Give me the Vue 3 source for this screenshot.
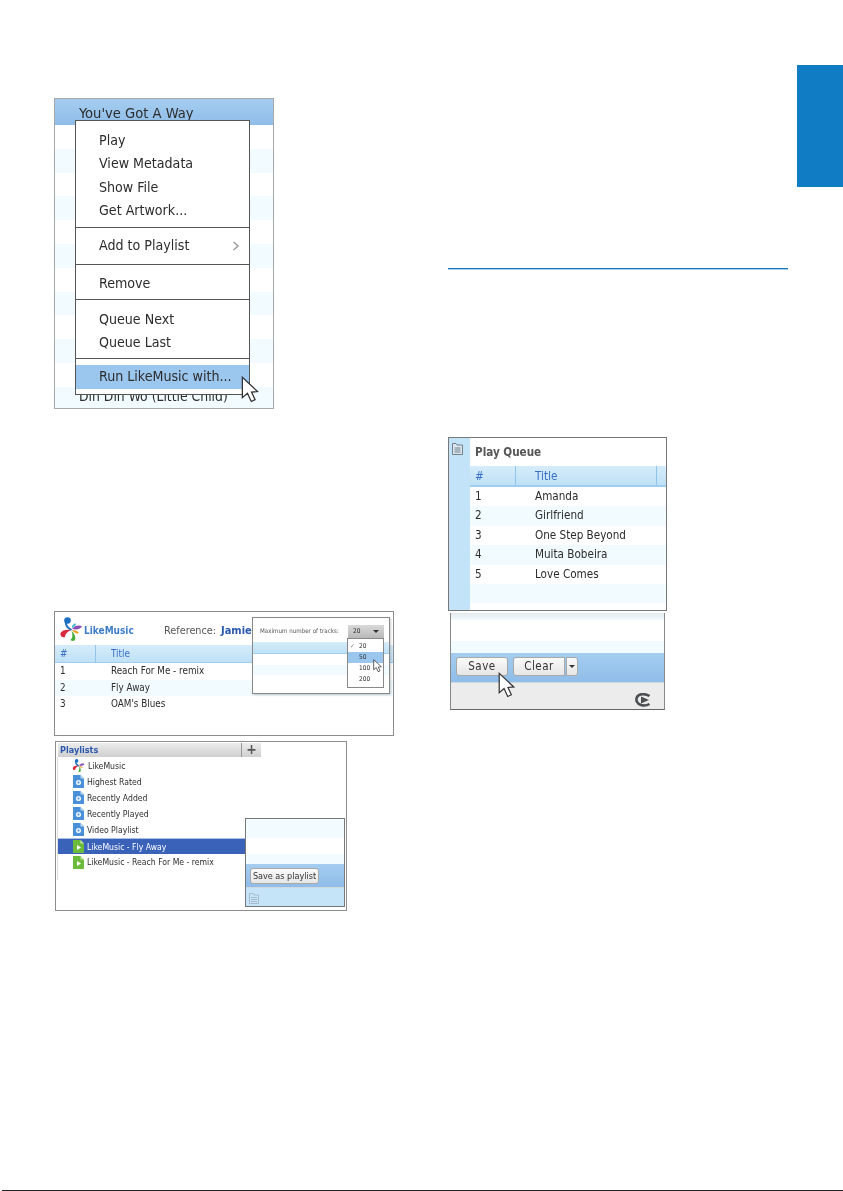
<script setup>
const menuGroups = [
  { cls: 'g1', items: ['Play', 'View Metadata', 'Show File', 'Get Artwork...'] },
  { cls: 'g2', items: ['Add to Playlist'], arrow: true },
  { cls: 'g3', items: ['Remove'] },
  { cls: 'g4', items: ['Queue Next', 'Queue Last'] }
]
const likeRows = [
  ['1', 'Reach For Me - remix'],
  ['2', 'Fly Away'],
  ['3', "OAM's Blues"]
]
const options = ['20', '50', '100', '200']
const playlists = [
  { name: 'LikeMusic', type: 'logo' },
  { name: 'Highest Rated', type: 'blue' },
  { name: 'Recently Added', type: 'blue' },
  { name: 'Recently Played', type: 'blue' },
  { name: 'Video Playlist', type: 'blue' },
  { name: 'LikeMusic - Fly Away', type: 'green', selected: true },
  { name: 'LikeMusic - Reach For Me - remix', type: 'green' }
]
const queue = ['Amanda', 'Girlfriend', 'One Step Beyond', 'Muita Bobeira', 'Love Comes', '']
const cursorPath = 'M1 1 L1 17 L5 13.5 L8 20 L11 18.6 L8.2 12.6 L13 12.2 Z'
</script>

<template>
  <div class="page">
    <div class="col-left">
      <section class="fig fig-menu">
        <div class="track-row selected">You've Got A Way</div>
        <div v-for="n in 11" :key="n" class="track-row" :class="{ light: n % 2 === 0 }"></div>
        <div class="track-row light last">Din Din Wo (Little Child)</div>
        <div class="context">
          <div v-for="g in menuGroups" :key="g.cls" class="group" :class="g.cls">
            <div v-for="it in g.items" :key="it" class="item">
              <span>{{ it }}</span>
              <svg v-if="g.arrow" class="chev" viewBox="0 0 8 10" width="8" height="10">
                <path d="M1.500 1 L6 5 L1.500 9" fill="none" stroke="#999" stroke-width="1.400" />
              </svg>
            </div>
          </div>
          <div class="group g5"><div class="item hot">Run LikeMusic with...</div></div>
        </div>
        <svg class="cursor cur-menu" viewBox="0 0 14 22" width="18" height="28">
          <path :d="cursorPath" fill="#fff" stroke="#333" stroke-width="1" />
        </svg>
      </section>

      <section class="fig fig-like">
        <header class="like-head">
          <svg class="logo" viewBox="0 0 24 24" width="24" height="24">
            <circle cx="8.500" cy="3.500" r="3.300" fill="#1d6fc0" />
            <path d="M7 5 C6 9 9 11 12.500 13" fill="none" stroke="#1d6fc0" stroke-width="2" />
            <path d="M12 13 C8 12 3 13 1.500 16 C1 19 3 21 6 20 C6 17 8 15 12 13 Z" fill="#d8293e" />
            <path d="M13 12 C16 8 19 8 23 9 C22 12 18 13 13 12 Z" fill="#8a4fb5" />
            <path d="M13 13 C16 13 19 14 20 16 C18 17 15 16 13 13 Z" fill="#e8a020" />
            <path d="M12.500 14 C15 16 17 19 16 23 C14.500 24.500 11.500 24 11.500 22.500 C13.500 22 14 18 12.500 14 Z" fill="#49ad3a" />
            <path d="M13 9 L16 6 L17 8 L13 11 Z" fill="#3bb6c9" />
          </svg>
          <span class="brand">LikeMusic</span>
          <span class="ref">Reference:</span>
          <span class="jamie">Jamie</span>
        </header>
        <div class="tbl-head like-cols">
          <span>#</span><span class="th-title">Title</span>
        </div>
        <div v-for="(r, i) in likeRows" :key="r[0]" class="like-row like-cols" :class="{ light: i === 1 }">
          <span>{{ r[0] }}</span><span>{{ r[1] }}</span>
        </div>
        <div class="tracks-pop">
          <div class="pop-line">
            <span class="pop-label">Maximum number of tracks:</span>
            <span class="select">20<i class="caret"></i></span>
          </div>
          <div class="pop-bar"></div>
          <div class="pop-stripe"></div>
          <div class="dropdown">
            <div v-for="(o, i) in options" :key="o" class="opt" :class="{ on: i === 1 }">
              <span class="tick">{{ i === 0 ? '✓' : '' }}</span>{{ o }}
            </div>
          </div>
          <svg class="cursor cur-pop" viewBox="0 0 14 22" width="9" height="14">
            <path :d="cursorPath" fill="#fff" stroke="#333" stroke-width="1.200" />
          </svg>
        </div>
      </section>

      <section class="fig fig-lists">
        <div class="lists-head">
          <span class="lists-title">Playlists</span>
          <span class="plus">+</span>
        </div>
        <div class="lists-body">
          <div v-for="p in playlists" :key="p.name" class="pl-row" :class="{ sel: p.selected }">
            <svg v-if="p.type === 'logo'" viewBox="0 0 24 24" width="13" height="13" class="pl-icon pl-logo">
              <circle cx="8.500" cy="3.500" r="3.300" fill="#1d6fc0" />
              <path d="M7 5 C6 9 9 11 12.500 13" fill="none" stroke="#1d6fc0" stroke-width="2.500" />
              <path d="M12 13 C8 12 3 13 1.500 16 C1 19 3 21 6 20 C6 17 8 15 12 13 Z" fill="#d8293e" />
              <path d="M13 12 C16 8 19 8 23 9 C22 12 18 13 13 12 Z" fill="#8a4fb5" />
              <path d="M13 13 C16 13 19 14 20 16 C18 17 15 16 13 13 Z" fill="#e8a020" />
              <path d="M12.500 14 C15 16 17 19 16 23 C14.500 24.500 11.500 24 11.500 22.500 C13.500 22 14 18 12.500 14 Z" fill="#49ad3a" />
            </svg>
            <svg v-else-if="p.type === 'blue'" viewBox="0 0 11 13" width="11" height="13" class="pl-icon">
              <path d="M0 0 H7.500 L11 3.500 V13 H0 Z" fill="#4a90d8" />
              <path d="M7.500 0 L11 3.500 H7.500 Z" fill="#b7d8f5" />
              <circle cx="5.500" cy="7.500" r="2.600" fill="#e8f3fc" />
              <circle cx="5.500" cy="7.500" r="1" fill="#4a90d8" />
            </svg>
            <svg v-else viewBox="0 0 11 13" width="11" height="13" class="pl-icon">
              <path d="M0 0 H7.500 L11 3.500 V13 H0 Z" fill="#6cbb3c" />
              <path d="M7.500 0 L11 3.500 H7.500 Z" fill="#c5e6a8" />
              <path d="M4 5 L8 7.500 L4 10 Z" fill="#fff" />
            </svg>
            <span>{{ p.name }}</span>
          </div>
        </div>
        <div class="save-pop">
          <div class="sp-a"></div>
          <div class="sp-b"></div>
          <div class="sp-c"></div>
          <div class="sp-d"><button class="btn sp-btn" type="button">Save as playlist</button></div>
          <div class="sp-e">
            <svg viewBox="0 0 10 11" width="10" height="11">
              <path d="M.5 .5 H4 L5 2 H9.500 V10.500 H.5 Z M2 4.500 H8 M2 6.500 H8 M2 8.500 H8" fill="none" stroke="#a9bccb" stroke-width="1" />
            </svg>
          </div>
        </div>
      </section>
    </div>

    <div class="col-right">
      <div class="rule"></div>
      <section class="fig fig-queue">
        <aside class="q-side">
          <svg viewBox="0 0 11 12" width="11" height="12">
            <path d="M.5 .5 H4 L5 2 H10.500 V11.500 H.5 Z" fill="#dfe7ee" stroke="#6f7f8c" />
            <path d="M2.500 5 H8.500 M2.500 7 H8.500 M2.500 9 H8.500" stroke="#6f7f8c" />
          </svg>
        </aside>
        <div class="q-main">
          <div class="q-title">Play Queue</div>
          <div class="tbl-head q-cols q-head">
            <span>#</span><span class="th-title">Title</span>
          </div>
          <div v-for="(t, i) in queue" :key="i" class="q-row q-cols" :class="{ light: i % 2 === 1 }">
            <span>{{ t ? i + 1 : '' }}</span><span>{{ t }}</span>
          </div>
        </div>
      </section>

      <section class="fig-save">
        <div class="sv-a"></div>
        <div class="sv-b"></div>
        <div class="sv-c"></div>
        <div class="sv-bar">
          <button class="btn sv-btn" type="button">Save</button>
          <button class="btn sv-btn clear" type="button">Clear</button>
          <button class="btn sv-more" type="button"><i class="caret"></i></button>
        </div>
        <div class="sv-foot">
          <svg viewBox="0 0 18 14" width="18" height="14">
            <path d="M15.500 3 C12 .5 5 .5 3 4 C1.500 7 3 11 7 12 C10 13 13 12.500 15.500 11" fill="none" stroke="#4b4f52" stroke-width="2.600" />
            <path d="M7 3.500 L15 7 L7 10.500 Z" fill="#4b4f52" />
          </svg>
        </div>
        <svg class="cursor cur-save" viewBox="0 0 14 22" width="17" height="27">
          <path :d="cursorPath" fill="#fff" stroke="#333" stroke-width="1" />
        </svg>
      </section>
    </div>

    <div class="col-tab"><div class="tab"></div></div>
    <div class="edge"></div>
  </div>
</template>

<style>
html, body { margin: 0; background: #fff; }
</style>

<style scoped>
.page {
  width: 843px;
  height: 1191px;
  position: relative;
  overflow: hidden;
  display: grid;
  grid-template-columns: 444px 353px 46px;
  background: #fff;
  color: #2c2c2c;
  font-family: "DejaVu Sans Condensed", "DejaVu Sans", sans-serif;
}
.col-left { padding: 98px 0 0 54px; }
.col-right { padding-top: 268px; }
.col-tab { padding-top: 65px; }
.tab { height: 122px; background: #0f7cc4; }
.rule { width: 340px; height: 1px; margin-left: 4px; background: #1874bb; box-shadow: 0 1px 0 rgba(24,116,187,.35); }
.edge { position: absolute; left: 2px; right: 0; bottom: 0; height: 1px; background: #222; }

.fig { position: relative; box-sizing: border-box; border: 1px solid #8d8d8d; background: #fff; overflow: hidden; filter: blur(.35px); }
.cursor { position: absolute; }
.caret { display: inline-block; width: 0; height: 0; border-left: 3px solid transparent; border-right: 3px solid transparent; border-top: 3px solid #333; }
.light { background: #f2fbff; }

/* context menu figure */
.fig-menu { width: 220px; height: 311px; border-color: #a8a8a8; font-size: 14.100px; }
.track-row { height: 23.800px; padding-left: 24px; line-height: 24px; box-sizing: border-box; }
.track-row.selected { height: 26px; line-height: 28px; font-size: 14.600px; background: linear-gradient(#a5cdf0, #8fbde8); }
.track-row.last { font-size: 13.800px; line-height: 18px; }
.context { position: absolute; left: 20px; top: 21px; width: 175px; height: 275px; box-sizing: border-box; border: 1px solid #555; background: #fff; }
.group { box-sizing: border-box; border-bottom: 1px solid #555; display: flex; flex-direction: column; justify-content: center; }
.g1 { height: 107px; padding-top: 3px; }
.g2 { height: 37px; }
.g3 { height: 35px; padding-top: 4px; }
.g4 { height: 59px; padding-top: 4px; }
.g5 { height: 35px; border-bottom: 0; justify-content: flex-start; padding-top: 6px; }
.item { height: 23.500px; line-height: 23.500px; padding: 0 9px 0 23px; display: flex; justify-content: space-between; align-items: center; flex: none; }
.item.hot { background: #9bc6ee; }
.chev { flex: none; }
.cur-menu { left: 186px; top: 277px; }

/* LikeMusic figure */
.fig-like { width: 340px; height: 125px; margin-top: 202px; font-size: 9.800px; }
.like-head { height: 33px; display: flex; align-items: center; position: relative; }
.logo { margin: 1px 0 0 4px; flex: none; }
.brand { margin: 4px 0 0 1px; width: 79px; color: #3f7dc6; font-weight: 700; font-size: 10px; }
.ref { margin: 4px 0 0 1px; width: 57px; color: #555; font-size: 10.800px; }
.jamie { margin-top: 4px; color: #2a58ad; font-weight: 700; font-size: 11px; }
.tbl-head { background: linear-gradient(#d5ecfa, #bfe1f6); border-bottom: 1px solid #9fcdef; color: #3a6fc4; box-sizing: border-box; }
.like-cols { display: grid; grid-template-columns: 36px 1fr; padding-left: 5px; align-items: center; }
.fig-like .tbl-head { height: 18px; }
.th-title { box-shadow: -1px 0 0 #8fc3ea; padding-left: 15px; height: 100%; display: flex; align-items: center; }
.like-row { height: 16.500px; line-height: 16.500px; }
.like-row span:last-child { padding-left: 15px; }
.tracks-pop { position: absolute; left: 197px; top: 5px; width: 138px; height: 77px; box-sizing: border-box; border: 1px solid #888; background: #fff; box-shadow: 1px 1px 2px rgba(0,0,0,.2); }
.pop-line { height: 24px; display: flex; align-items: center; justify-content: space-between; padding: 0 5px 0 7px; }
.pop-label { font-size: 6.200px; color: #555; }
.select { width: 36px; height: 13px; box-sizing: border-box; padding: 0 5px; display: flex; align-items: center; justify-content: space-between; font-size: 6.500px; background: linear-gradient(#d9d9d9, #b9b9b9); margin-top: 2px; }
.pop-bar { height: 11px; background: linear-gradient(#d5ecfa, #bfe1f6); border-bottom: 1px solid #a4d0ef; margin-top: 0; }
.pop-stripe { height: 10px; margin-top: 11px; background: #f2fbff; }
.dropdown { position: absolute; left: 94px; top: 20px; width: 37px; height: 50px; box-sizing: border-box; border: 1px solid #888; background: #fff; padding-top: 2px; font-size: 6.500px; }
.opt { height: 11px; line-height: 11px; padding-left: 2px; display: flex; }
.opt.on { background: #9bc6ee; }
.tick { width: 9px; color: #777; }
.cur-pop { left: 120px; top: 41px; }

/* Playlists figure */
.fig-lists { width: 292px; height: 170px; margin: 5px 0 0 1px; font-size: 8.600px; padding: 1px 0 0 2px; }
.lists-head { width: 203px; height: 14px; display: flex; background: linear-gradient(#ececec, #cfcfcf); }
.lists-title { width: 184px; padding-left: 2px; box-sizing: border-box; color: #2a58ad; font-weight: 700; font-size: 9px; line-height: 14px; border-right: 1px solid #999; }
.plus { flex: 1; text-align: center; font-size: 14px; line-height: 13px; font-weight: 700; color: #555; }
.lists-body { padding-top: .5px; width: 188px; height: 122px; box-shadow: -1px 0 0 #ddd; }
.pl-row { height: 16.100px; display: flex; align-items: center; padding-left: 15px; box-sizing: border-box; }
.pl-row.sel { background: #3a62b8; color: #fff; border-top: 1px solid #a9c0e6; }
.pl-icon { flex: none; margin-right: 3px; }
.pl-logo { margin-left: -1px; }
.save-pop { position: absolute; left: 189px; top: 76px; width: 100px; height: 89px; box-sizing: border-box; border: 1px solid #777; background: #fff; display: flex; flex-direction: column; }
.sp-a { height: 19px; background: #f2fbff; }
.sp-b { height: 16px; }
.sp-c { height: 10px; background: #f2fbff; }
.sp-d { height: 23px; display: flex; align-items: center; padding-left: 4px; background: linear-gradient(#a5cdf0, #8fbde8); border-bottom: 1px solid #cfd8df; }
.sp-e { flex: 1; background: #c5e4f7; padding: 5px 0 0 3px; }
.btn { box-sizing: border-box; border: 1px solid #a9a9a9; border-radius: 3px; background: linear-gradient(#fafafa, #e6e6e6); padding: 0; font-family: inherit; color: #333; }
.sp-btn { width: 69px; height: 16px; font-size: 9px; line-height: 14px; }

/* Play queue figure */
.fig-queue { width: 219px; height: 174px; margin: 168px 0 0 4px; display: flex; border-color: #777; font-size: 11.600px; }
.q-side { width: 21px; flex: none; background: #c3e3f8; padding: 5px 0 0 3px; box-sizing: border-box; }
.q-side svg { display: block; }
.q-main { flex: 1; min-width: 0; }
.q-title { height: 28px; line-height: 29px; padding-left: 5px; font-weight: 700; color: #555; }
.q-cols { display: grid; grid-template-columns: 41px 141px 1fr; padding-left: 5px; align-items: center; }
.q-head { height: 21px; border-bottom-width: 2px; }
.q-head::after { content: ""; height: 100%; box-shadow: -1px 0 0 #8fc3ea; }
.q-head .th-title { padding-left: 19px; }
.q-row { height: 19.400px; line-height: 19.400px; }
.q-row span:last-child { padding-left: 19px; }

/* Save bar figure */
.fig-save { position: relative; width: 215px; height: 97px; margin: 2px 0 0 6px; box-sizing: border-box; border-left: 1px solid #888; border-right: 1px solid #888; border-bottom: 1px solid #666; background: #fff; display: flex; flex-direction: column; filter: blur(.35px); }
.sv-a { height: 7px; background: linear-gradient(#e4e9ec, #f2fbff); }
.sv-b { height: 21px; }
.sv-c { height: 12px; background: #f2fbff; }
.sv-bar { height: 30px; display: flex; align-items: center; padding: 0 0 2px 5px; box-sizing: border-box; background: linear-gradient(#a5cdf0, #8fbde8); border-bottom: 1px solid #cfd8df; }
.sv-btn { width: 52px; height: 19px; font-size: 11.500px; letter-spacing: .5px; line-height: 17px; }
.clear { margin-left: 5px; border-radius: 3px 0 0 3px; }
.sv-more { width: 12px; height: 19px; margin-left: 1px; border-radius: 0 3px 3px 0; display: flex; align-items: center; justify-content: center; }
.sv-foot { flex: 1; background: #ececec; display: flex; justify-content: flex-end; align-items: flex-end; padding: 0 12px 2px 0; }
.cur-save { left: 47px; top: 59px; }
</style>
